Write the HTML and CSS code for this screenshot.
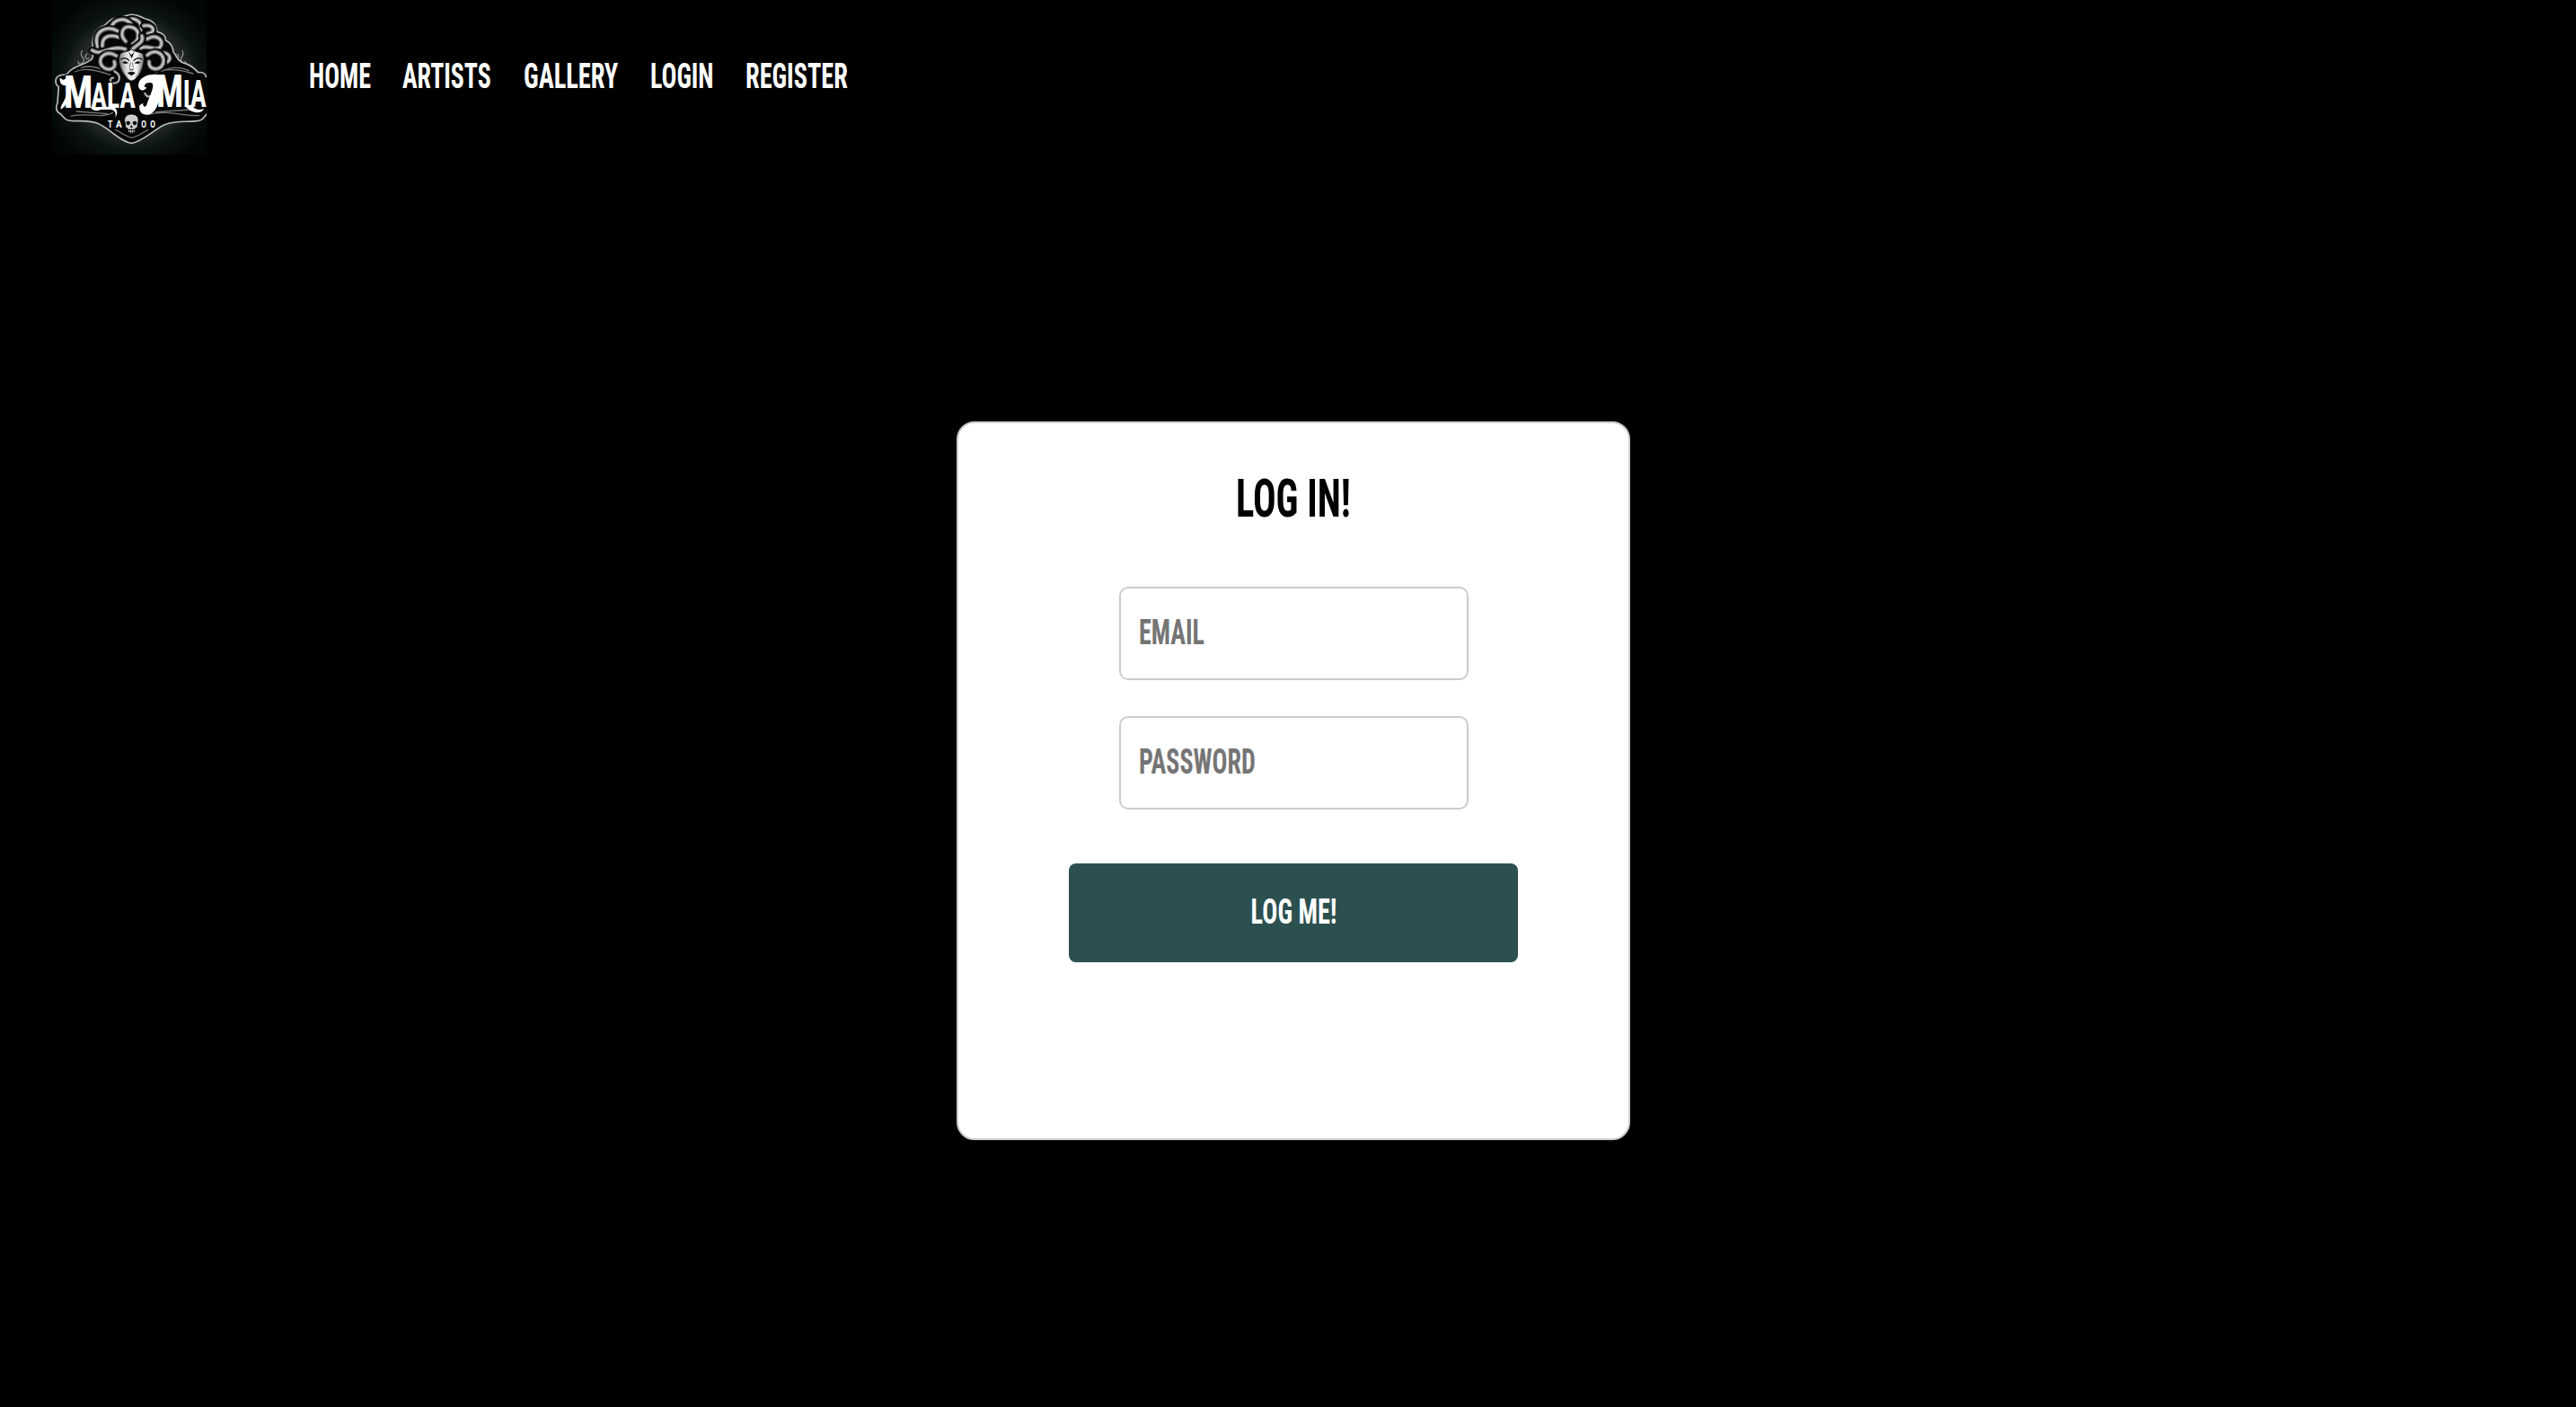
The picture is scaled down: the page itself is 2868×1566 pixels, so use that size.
FILE: index.html
```
<!DOCTYPE html>
<html lang="en">
<head>
<meta charset="utf-8">
<title>Mala Mia Tattoo</title>
<link rel="stylesheet" href="styles.css">
</head>
<body>
<header class="header">
  <a class="logo" href="#" aria-label="Mala Mia Tattoo">
    <svg class="logo-art" viewBox="54 0 516 516">
      <defs>
        <radialGradient id="glow" gradientUnits="userSpaceOnUse" cx="318" cy="270" r="310">
          <stop offset="0" stop-color="#4a5050"/>
          <stop offset=".5" stop-color="#303636"/>
          <stop offset=".75" stop-color="#0b1311"/>
          <stop offset="1" stop-color="#010605"/>
        </radialGradient>
        <linearGradient id="face" x1="0" x2="1" y1="0" y2="0">
          <stop offset="0" stop-color="#777"/>
          <stop offset=".3" stop-color="#ddd"/>
          <stop offset=".7" stop-color="#f4f4f4"/>
          <stop offset="1" stop-color="#777"/>
        </linearGradient>
        <path id="s1" d="M306 68C330 54 362 76 348 104"/>
        <path id="s2" d="M250 96C258 62 296 56 318 80"/>
        <path id="s3" d="M360 86C394 80 402 108 374 112"/>
        <path id="s4" d="M206 156C190 104 236 82 274 104"/>
        <path id="s5" d="M222 154C220 122 244 114 276 124"/>
        <path id="s6" d="M372 130C404 110 432 138 414 158C396 172 378 148 350 160"/>
        <path id="s7" d="M426 176C458 180 450 214 424 208"/>
        <path id="s8" d="M188 168C222 190 244 148 298 164"/>
        <path id="s9" d="M268 186C236 166 206 190 218 216C232 240 272 234 262 206"/>
        <path id="s10" d="M372 184C402 158 434 184 424 214C412 240 374 232 378 206"/>
        <path id="s11" d="M300 138C278 116 288 86 316 90C346 94 350 132 324 146"/>
        <path id="s12" d="M354 120C362 146 330 150 320 168"/>
      </defs>
      <rect x="54" width="516" height="516" fill="url(#glow)"/>
      <path class="tendrils" d="M155 168C140 188 168 192 158 208C146 220 138 208 142 204M172 178C158 190 170 202 178 194M488 168C502 188 476 190 486 206C496 216 502 208 498 204M470 180C484 186 474 202 464 194"/>
      <path class="badge" d="M320 49C345 48 352 60 366 63C392 67 402 82 405 106C425 110 434 122 433 134C452 144 458 158 459 174C471 186 470 200 488 208C512 214 530 228 542 242C556 240 566 246 568 256L574 254V378C564 384 562 398 548 402C520 410 470 400 430 416C395 432 356 474 320 478C282 474 248 430 206 412C170 398 134 408 108 402C92 398 90 386 82 380C66 374 66 358 72 344L76 290C62 280 62 258 80 252C94 248 104 252 110 240C130 218 160 218 184 200C196 190 188 176 191 160C184 130 198 96 226 86C240 80 246 60 268 60C290 62 296 50 320 49Z"/>
      <path class="feathers" d="M130 240C170 222 214 240 250 250M150 226C186 216 214 226 236 242M392 246C430 226 480 232 526 246M420 238C456 220 490 226 512 236M116 388C170 374 216 398 258 376M134 372L240 380M376 382C440 366 490 388 546 386M400 374L520 366M264 432C288 444 300 456 320 460C340 456 356 444 376 432"/>
      <g class="snakes">
        <use class="edge" href="#s1"/><use class="body" href="#s1"/><use class="shine" href="#s1"/>
        <use class="edge" href="#s2"/><use class="body" href="#s2"/><use class="shine" href="#s2"/>
        <use class="edge" href="#s3"/><use class="body" href="#s3"/><use class="shine" href="#s3"/>
        <use class="edge" href="#s4"/><use class="body" href="#s4"/><use class="shine" href="#s4"/>
        <use class="edge" href="#s5"/><use class="body" href="#s5"/><use class="shine" href="#s5"/>
        <use class="edge" href="#s6"/><use class="body" href="#s6"/><use class="shine" href="#s6"/>
        <use class="edge" href="#s7"/><use class="body" href="#s7"/><use class="shine" href="#s7"/>
        <use class="edge" href="#s8"/><use class="body" href="#s8"/><use class="shine" href="#s8"/>
        <use class="edge" href="#s9"/><use class="body" href="#s9"/><use class="shine" href="#s9"/>
        <use class="edge" href="#s10"/><use class="body" href="#s10"/><use class="shine" href="#s10"/>
        <use class="edge" href="#s11"/><use class="body" href="#s11"/><use class="shine" href="#s11"/>
        <use class="edge" href="#s12"/><use class="body" href="#s12"/><use class="shine" href="#s12"/>
      </g>
      <path class="face" d="M280 182C292 168 306 176 319 164C332 176 348 170 359 182C364 206 356 232 344 250C334 264 326 270 319 270C312 270 302 260 294 248C280 228 274 206 280 182Z"/>
      <path class="brows" d="M283 199C294 190 304 194 312 203M355 199C344 190 334 194 326 203"/>
      <path class="features" d="M287 209L298 204L310 211L298 213ZM351 209L340 204L328 211L340 213ZM309 173L319 184L329 173L320 195ZM311 228L319 233L327 228L323 235H315ZM305 244L315 239L319 241L323 239L333 244L319 253Z"/>
      <path class="cheeks" d="M281 207C286 228 294 244 306 258M357 207C352 228 344 244 332 258M316 208L313 226M322 208L325 226"/>
      <path class="curls-edge" d="M262 238C286 250 282 276 262 278C244 276 246 260 258 260M400 246C376 250 352 254 340 268"/>
      <path class="curls" d="M262 238C286 250 282 276 262 278C244 276 246 260 258 260M364 312C372 328 388 324 388 312"/>
      <g class="wordmark">
        <text x="92" y="360" font-size="148" textLength="98" lengthAdjust="spacingAndGlyphs">M</text>
        <text x="184" y="361" font-size="116" textLength="149" lengthAdjust="spacingAndGlyphs">ALA</text>
        <text x="402" y="358" font-size="148" textLength="90" lengthAdjust="spacingAndGlyphs">M</text>
        <text x="491" y="358" font-size="130" textLength="78" lengthAdjust="spacingAndGlyphs">IA</text>
      </g>
      <path class="swash" d="M122 254C104 244 104 266 92 266C84 266 84 258 80 262C78 280 92 292 108 282L122 270ZM104 300C104 330 84 346 82 364C92 362 104 350 112 320ZM424 254C390 240 344 254 342 284C342 302 362 308 370 292C356 292 362 274 384 276C402 280 380 320 370 350C364 362 356 354 358 344L346 352C340 388 384 396 402 360C416 330 420 300 432 274ZM176 346C184 370 200 374 216 366H252C264 370 270 380 264 392C276 380 272 362 258 356L180 358ZM496 352C514 376 550 386 562 362C548 370 530 366 518 350Z"/>
      <g class="tattoo">
        <text x="240" y="425" textLength="16" lengthAdjust="spacingAndGlyphs">T</text>
        <text x="267" y="425" textLength="20" lengthAdjust="spacingAndGlyphs">A</text>
        <text x="352" y="425" textLength="17" lengthAdjust="spacingAndGlyphs">O</text>
        <text x="382" y="425" textLength="17" lengthAdjust="spacingAndGlyphs">O</text>
      </g>
      <path class="skull" d="M296 404C294 388 306 381 319 381C334 381 345 390 342 406C341 414 338 418 340 425L332 429L331 440C327 446 312 446 308 440L306 429L299 425C300 418 297 412 296 404Z"/>
      <path class="skull-holes" d="M301 408C306 402 314 404 315 410C314 420 302 422 301 408ZM337 408C332 402 324 404 323 410C324 420 336 422 337 408ZM319 417L314 426H324ZM309 432H330V435H309ZM313 430H315V443H313ZM318 430H320V444H318ZM324 430H326V443H324Z"/>
    </svg>
  </a>
  <nav class="nav">
    <a class="nav-link nav-link--home" href="#"><span class="condensed">HOME</span></a>
    <a class="nav-link nav-link--artists" href="#"><span class="condensed">ARTISTS</span></a>
    <a class="nav-link nav-link--gallery" href="#"><span class="condensed">GALLERY</span></a>
    <a class="nav-link nav-link--login" href="#"><span class="condensed">LOGIN</span></a>
    <a class="nav-link nav-link--register" href="#"><span class="condensed">REGISTER</span></a>
  </nav>
</header>
<main class="main">
  <form class="card">
    <h1 class="title"><span class="condensed">LOG IN!</span></h1>
    <div class="field"><input class="input" type="email" placeholder="EMAIL" aria-label="Email"></div>
    <div class="field"><input class="input" type="password" placeholder="PASSWORD" aria-label="Password"></div>
    <button class="submit" type="button"><span class="condensed">LOG ME!</span></button>
  </form>
</main>
</body>
</html>
```
FILE: styles.css
```
* { box-sizing: border-box; }

body {
  margin: 0;
  min-height: 100vh;
  background: #000;
  color: #fff;
  font: 700 39.4px/46px Roboto, sans-serif;
  font-stretch: 75%;
}

.header {
  display: flex;
  height: 172px;
  padding-left: 58px;
}

.logo { width: 172px; height: 172px; }
.logo-art { display: block; width: 172px; height: 172px; }

/* Squeezes the face to the narrow proportions of the headings */
.condensed {
  display: inline-block;
  transform: scaleX(var(--squeeze, .72));
  transform-origin: 0 50%;
  white-space: nowrap;
}

.nav {
  display: flex;
  gap: 36px;
  padding: 62px 0 0 114px;
}

.nav-link { display: block; height: 46px; color: #fff; text-decoration: none; }
.nav-link--home { width: 68px; --squeeze: .71; }
.nav-link--artists { width: 99px; --squeeze: .705; }
.nav-link--gallery { width: 105px; --squeeze: .722; }
.nav-link--login { width: 70px; --squeeze: .71; }
.nav-link--register { width: 113px; --squeeze: .718; }

.main {
  display: flex;
  justify-content: center;
  padding: 297px 0 0 12px;
}

.card {
  display: flex;
  flex-direction: column;
  align-items: center;
  width: 750px;
  height: 800px;
  padding-top: 49px;
  border: 2px solid #ccc;
  border-radius: 20px;
  background: #fff;
}

.title {
  margin: 0 0 63px;
  height: 70px;
  color: #000;
  font-size: 59.1px;
  font-weight: 700;
  line-height: 70px;
}

.title .condensed,
.submit .condensed { transform-origin: 50% 50%; }

.field {
  width: 389px;
  height: 104px;
  margin-bottom: 40px;
  padding: 0 20px;
  border: 2px solid #ccc;
  border-radius: 10px;
  overflow: hidden;
}

.input {
  display: block;
  width: 480px;
  height: 97px;
  padding: 0;
  border: 0;
  outline: 0;
  background: transparent;
  color: #000;
  font: inherit;
  transform: scaleX(.712);
  transform-origin: 0 50%;
}

.input::placeholder { color: #757575; opacity: 1; }

.submit {
  width: 500px;
  height: 110px;
  margin-top: 20px;
  padding: 0 0 3px;
  border: 0;
  border-radius: 8px;
  background: #2c4f4f;
  color: #fff;
  font: inherit;
}

/* Logo artwork */
.tendrils { fill: none; stroke: #999; stroke-width: 3.5; }
.badge { fill: #050707; stroke: #b9bbbb; stroke-width: 5; }
.feathers { fill: none; stroke: #777; stroke-width: 4; }
.snakes { fill: none; stroke-linecap: round; }
.edge { stroke: #050505; stroke-width: 25; }
.body { stroke: #666; stroke-width: 15; }
.shine { stroke: #c4c4c4; stroke-width: 7; }
.face { fill: url(#face); stroke: #111; stroke-width: 3; }
.features { fill: #111; }
.brows { fill: none; stroke: #111; stroke-width: 4; }
.cheeks { fill: none; stroke: #666; stroke-width: 2.5; }
.curls-edge { fill: none; stroke: #050505; stroke-width: 18; }
.curls { fill: none; stroke: #aaa; stroke-width: 7; stroke-linecap: round; }
.wordmark {
  fill: #fff;
  stroke: #000;
  stroke-width: 7;
  paint-order: stroke;
  font-family: Roboto, sans-serif;
  font-weight: 700;
}
.swash { fill: #fff; }
.tattoo { fill: #fff; font: 700 35px Roboto, sans-serif; }
.skull { fill: #ccc; stroke: #000; stroke-width: 3; }
.skull-holes { fill: #111; }
```
